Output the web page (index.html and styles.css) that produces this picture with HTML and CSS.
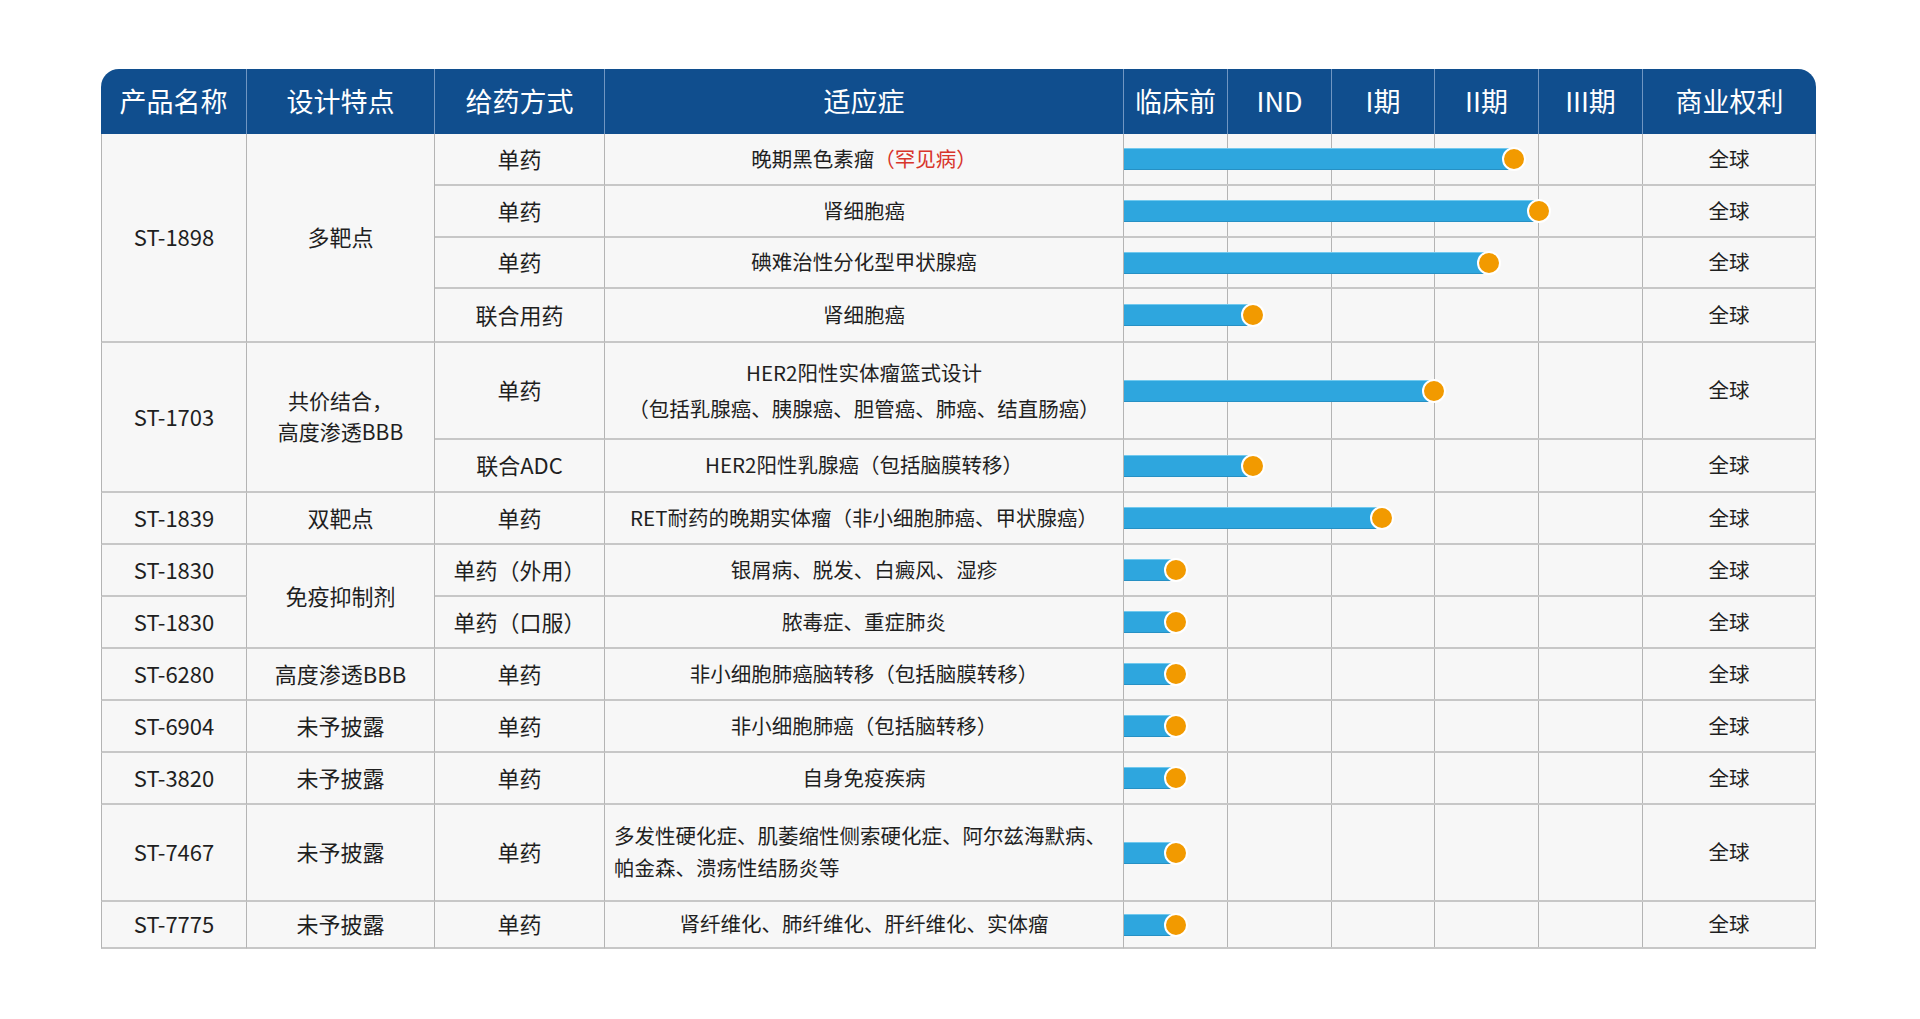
FILE: index.html
```html
<!DOCTYPE html>
<html lang="zh-CN">
<head>
<meta charset="utf-8">
<title>产品管线</title>
<link rel="stylesheet" href="styles.css">
</head>
<body>
<div class="page">
  <div class="pipeline">
    <div class="hd first">产品名称</div>
    <div class="hd">设计特点</div>
    <div class="hd">给药方式</div>
    <div class="hd">适应症</div>
    <div class="hd">临床前</div>
    <div class="hd">IND</div>
    <div class="hd">I期</div>
    <div class="hd">II期</div>
    <div class="hd">III期</div>
    <div class="hd last">商业权利</div>

    <!-- ST-1898 -->
    <div class="cell c1 big span4">ST-1898</div>
    <div class="cell big span4">多靶点</div>
    <div class="cell big">单药</div>
    <div class="cell ind">晚期黑色素瘤<span class="rare">（罕见病）</span></div>
    <div class="stage"><div class="lines"><i></i><i></i><i class="n"></i><i></i><i></i></div><div class="track"><span class="bar" style="width:390px"></span><span class="dot"></span></div></div>
    <div class="cell ind">全球</div>

    <div class="cell big">单药</div>
    <div class="cell ind">肾细胞癌</div>
    <div class="stage"><div class="lines"><i></i><i></i><i class="n"></i><i></i><i></i></div><div class="track"><span class="bar" style="width:415px"></span><span class="dot"></span></div></div>
    <div class="cell ind">全球</div>

    <div class="cell big">单药</div>
    <div class="cell ind">碘难治性分化型甲状腺癌</div>
    <div class="stage"><div class="lines"><i></i><i></i><i class="n"></i><i></i><i></i></div><div class="track"><span class="bar" style="width:365px"></span><span class="dot"></span></div></div>
    <div class="cell ind">全球</div>

    <div class="cell big">联合用药</div>
    <div class="cell ind">肾细胞癌</div>
    <div class="stage"><div class="lines"><i></i><i></i><i class="n"></i><i></i><i></i></div><div class="track"><span class="bar" style="width:129px"></span><span class="dot"></span></div></div>
    <div class="cell ind">全球</div>

    <!-- ST-1703 -->
    <div class="cell c1 big span2">ST-1703</div>
    <div class="cell big span2 two">共价结合，<br>高度渗透BBB</div>
    <div class="cell big">单药</div>
    <div class="cell ind her">HER2阳性实体瘤篮式设计<br>（包括乳腺癌、胰腺癌、胆管癌、肺癌、结直肠癌）</div>
    <div class="stage"><div class="lines"><i></i><i></i><i class="n"></i><i></i><i></i></div><div class="track"><span class="bar" style="width:310px"></span><span class="dot"></span></div></div>
    <div class="cell ind">全球</div>

    <div class="cell big">联合ADC</div>
    <div class="cell ind">HER2阳性乳腺癌（包括脑膜转移）</div>
    <div class="stage"><div class="lines"><i></i><i></i><i class="n"></i><i></i><i></i></div><div class="track"><span class="bar" style="width:129px"></span><span class="dot"></span></div></div>
    <div class="cell ind">全球</div>

    <!-- ST-1839 -->
    <div class="cell c1 big">ST-1839</div>
    <div class="cell big">双靶点</div>
    <div class="cell big">单药</div>
    <div class="cell ind">RET耐药的晚期实体瘤（非小细胞肺癌、甲状腺癌）</div>
    <div class="stage"><div class="lines"><i></i><i></i><i class="n"></i><i></i><i></i></div><div class="track"><span class="bar" style="width:258px"></span><span class="dot"></span></div></div>
    <div class="cell ind">全球</div>

    <!-- ST-1830 -->
    <div class="cell c1 big">ST-1830</div>
    <div class="cell big span2">免疫抑制剂</div>
    <div class="cell big">单药（外用）</div>
    <div class="cell ind">银屑病、脱发、白癜风、湿疹</div>
    <div class="stage"><div class="lines"><i></i><i></i><i class="n"></i><i></i><i></i></div><div class="track"><span class="bar" style="width:52px"></span><span class="dot"></span></div></div>
    <div class="cell ind">全球</div>

    <div class="cell c1 big">ST-1830</div>
    <div class="cell big">单药（口服）</div>
    <div class="cell ind">脓毒症、重症肺炎</div>
    <div class="stage"><div class="lines"><i></i><i></i><i class="n"></i><i></i><i></i></div><div class="track"><span class="bar" style="width:52px"></span><span class="dot"></span></div></div>
    <div class="cell ind">全球</div>

    <!-- ST-6280 -->
    <div class="cell c1 big">ST-6280</div>
    <div class="cell big">高度渗透BBB</div>
    <div class="cell big">单药</div>
    <div class="cell ind">非小细胞肺癌脑转移（包括脑膜转移）</div>
    <div class="stage"><div class="lines"><i></i><i></i><i class="n"></i><i></i><i></i></div><div class="track"><span class="bar" style="width:52px"></span><span class="dot"></span></div></div>
    <div class="cell ind">全球</div>

    <!-- ST-6904 -->
    <div class="cell c1 big">ST-6904</div>
    <div class="cell big">未予披露</div>
    <div class="cell big">单药</div>
    <div class="cell ind">非小细胞肺癌（包括脑转移）</div>
    <div class="stage"><div class="lines"><i></i><i></i><i class="n"></i><i></i><i></i></div><div class="track"><span class="bar" style="width:52px"></span><span class="dot"></span></div></div>
    <div class="cell ind">全球</div>

    <!-- ST-3820 -->
    <div class="cell c1 big">ST-3820</div>
    <div class="cell big">未予披露</div>
    <div class="cell big">单药</div>
    <div class="cell ind">自身免疫疾病</div>
    <div class="stage"><div class="lines"><i></i><i></i><i class="n"></i><i></i><i></i></div><div class="track"><span class="bar" style="width:52px"></span><span class="dot"></span></div></div>
    <div class="cell ind">全球</div>

    <!-- ST-7467 -->
    <div class="cell c1 big">ST-7467</div>
    <div class="cell big">未予披露</div>
    <div class="cell big">单药</div>
    <div class="cell ind left">多发性硬化症、肌萎缩性侧索硬化症、阿尔兹海默病、<br>帕金森、溃疡性结肠炎等</div>
    <div class="stage"><div class="lines"><i></i><i></i><i class="n"></i><i></i><i></i></div><div class="track"><span class="bar" style="width:52px"></span><span class="dot"></span></div></div>
    <div class="cell ind">全球</div>

    <!-- ST-7775 -->
    <div class="cell c1 big">ST-7775</div>
    <div class="cell big">未予披露</div>
    <div class="cell big">单药</div>
    <div class="cell ind">肾纤维化、肺纤维化、肝纤维化、实体瘤</div>
    <div class="stage"><div class="lines"><i></i><i></i><i class="n"></i><i></i><i></i></div><div class="track"><span class="bar" style="width:52px"></span><span class="dot"></span></div></div>
    <div class="cell ind">全球</div>
  </div>
</div>
</body>
</html>
```

FILE: styles.css
```css
* { box-sizing: border-box; }

html, body {
  margin: 0;
  padding: 0;
  background: #ffffff;
}

body {
  font-family: "Noto Sans CJK SC", "Noto Sans", sans-serif;
  color: #1f1f1f;
}

.page {
  padding: 69px 0 0 101px;
}

.pipeline {
  display: grid;
  width: 1715px;
  grid-template-columns: 146px 188px 170px 519px 104px 104px 103px 104px 104px 173px;
  grid-template-rows: 65px 52px 52px 51px 54px 97px 53px 52px 52px 52px 52px 52px 52px 97px 47px;
  border-radius: 18px 18px 0 0;
  overflow: hidden;
  background: #f7f7f7;
}

/* header */
.hd {
  background: #104e8e;
  color: #ffffff;
  font-size: 27px;
  display: flex;
  align-items: center;
  justify-content: center;
  padding-bottom: 3px;
  border-right: 1px solid #7096c2;
  white-space: nowrap;
}
.hd.last { border-right: none; }

.cell {
  display: flex;
  align-items: center;
  justify-content: center;
  text-align: center;
  border-right: 1px solid #b4b4b4;
  border-bottom: 2px solid #c7c7c7;
  white-space: nowrap;
  padding-bottom: 3px;
}
.c1 { border-left: 1px solid #b4b4b4; }

.big { font-size: 22px; }
.ind { font-size: 20.5px; }

.span4 { grid-row: span 4; }
.span2 { grid-row: span 2; }

.two { font-size: 21px; line-height: 31px; }
.her { line-height: 36px; padding-bottom: 1px; }
.left {
  justify-content: flex-start;
  text-align: left;
  padding-left: 9px;
  line-height: 32px;
}

.rare { color: #d8352b; }

/* stage bars */
.stage {
  grid-column: span 5;
  display: grid;
  border-bottom: 2px solid #c7c7c7;
}
.lines {
  grid-area: 1 / 1;
  display: flex;
}
.lines i {
  display: block;
  width: 104px;
  border-right: 1px solid #b4b4b4;
}
.lines i.n { width: 103px; }

.track {
  grid-area: 1 / 1;
  display: flex;
  align-items: center;
}
.bar {
  display: block;
  height: 22px;
  background: #2ea6de;
  border-top: 1px solid #72c9ee;
  border-bottom: 1px solid #2690c4;
}
.dot {
  display: block;
  width: 24px;
  height: 24px;
  margin-left: -12px;
  border-radius: 50%;
  background: #f29a00;
  border: 2px solid #ffffff;
}
```
